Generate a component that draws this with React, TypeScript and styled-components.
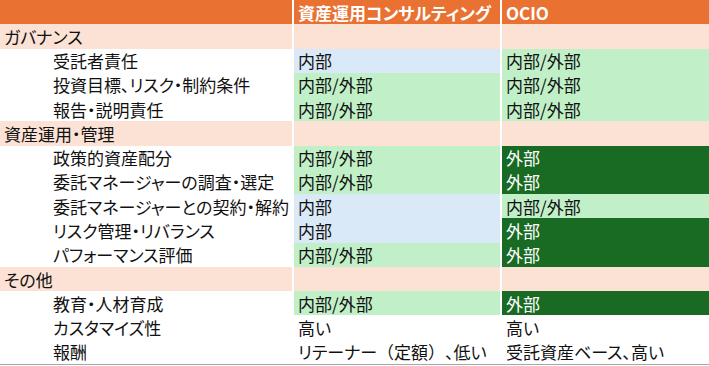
import styled, { createGlobalStyle } from "styled-components";

type Tone = "none" | "blue" | "green" | "dark";

interface RowData {
  label: string;
  section?: boolean;
  consulting?: [string, Tone];
  ocio?: [string, Tone];
}

const rows: RowData[] = [
  { label: "ガバナンス", section: true },
  { label: "受託者責任", consulting: ["内部", "blue"], ocio: ["内部/外部", "green"] },
  { label: "投資目標、リスク・制約条件", consulting: ["内部/外部", "green"], ocio: ["内部/外部", "green"] },
  { label: "報告・説明責任", consulting: ["内部/外部", "green"], ocio: ["内部/外部", "green"] },
  { label: "資産運用・管理", section: true },
  { label: "政策的資産配分", consulting: ["内部/外部", "green"], ocio: ["外部", "dark"] },
  { label: "委託マネージャーの調査・選定", consulting: ["内部/外部", "green"], ocio: ["外部", "dark"] },
  { label: "委託マネージャーとの契約・解約", consulting: ["内部", "blue"], ocio: ["内部/外部", "green"] },
  { label: "リスク管理・リバランス", consulting: ["内部", "blue"], ocio: ["外部", "dark"] },
  { label: "パフォーマンス評価", consulting: ["内部/外部", "green"], ocio: ["外部", "dark"] },
  { label: "その他", section: true },
  { label: "教育・人材育成", consulting: ["内部/外部", "green"], ocio: ["外部", "dark"] },
  { label: "カスタマイズ性", consulting: ["高い", "none"], ocio: ["高い", "none"] },
  { label: "報酬", consulting: ["リテーナー（定額）、低い", "none"], ocio: ["受託資産ベース、高い", "none"] },
];

const toneBg: Record<Tone, string> = {
  none: "#ffffff",
  blue: "#dae9f8",
  green: "#c1f0c8",
  dark: "#196b24",
};

// full-width brackets keep their em box, as in the sheet's font
function renderText(text: string) {
  return text.split(/([（）])/).map((part, i) =>
    part === "（" || part === "）" ? <Wide key={i}>{part}</Wide> : part
  );
}

function App() {
  return (
    <>
      <GlobalStyle />
      <Sheet>
        <Cell $bg="#e97132" />
        <HeadCell>資産運用コンサルティング</HeadCell>
        <HeadCell>OCIO</HeadCell>
        {rows.map((row) =>
          row.section ? (
            <SectionRow key={row.label} label={row.label} />
          ) : (
            <ItemRow key={row.label} row={row} />
          )
        )}
      </Sheet>
    </>
  );
}

function SectionRow({ label }: { label: string }) {
  return (
    <>
      <Cell $bg="#fbe2d5">{label}</Cell>
      <Cell $bg="#fbe2d5" />
      <Cell $bg="#fbe2d5" />
    </>
  );
}

function ItemRow({ row }: { row: RowData }) {
  const [c, ct] = row.consulting ?? ["", "none"];
  const [o, ot] = row.ocio ?? ["", "none"];
  return (
    <>
      <Cell $bg="#ffffff" $indent>
        {row.label}
      </Cell>
      <Cell $bg={toneBg[ct]} $light={ct === "dark"}>
        {renderText(c)}
      </Cell>
      <Cell $bg={toneBg[ot]} $light={ot === "dark"}>
        {renderText(o)}
      </Cell>
    </>
  );
}

const GlobalStyle = createGlobalStyle`
  body {
    margin: 0;
    background: #ffffff;
    font-family: "Noto Sans CJK JP", "Noto Sans", sans-serif;
    color: #111111;
  }
`;

const Sheet = styled.div`
  display: grid;
  grid-template-columns: 292px 206px 1fr;
  grid-template-rows: repeat(15, 1fr);
  column-gap: 2px;
  width: 709px;
  height: 364px;
  border-bottom: 1px solid #a6a6a6;
  background: #ffffff;
`;

const Cell = styled.div<{ $bg: string; $indent?: boolean; $light?: boolean }>`
  display: flex;
  align-items: center;
  padding-left: ${(p) => (p.$indent ? "53px" : "4px")};
  background: ${(p) => p.$bg};
  color: ${(p) => (p.$light ? "#ffffff" : "#111111")};
  font-size: 17px;
  line-height: 1;
  white-space: pre;
  overflow: hidden;
  font-feature-settings: "palt";
`;

const Wide = styled.span`
  font-feature-settings: normal;
`;

const HeadCell = styled(Cell).attrs({ $bg: "#e97132" })`
  color: #ffffff;
  font-weight: 700;
`;

export default App;
